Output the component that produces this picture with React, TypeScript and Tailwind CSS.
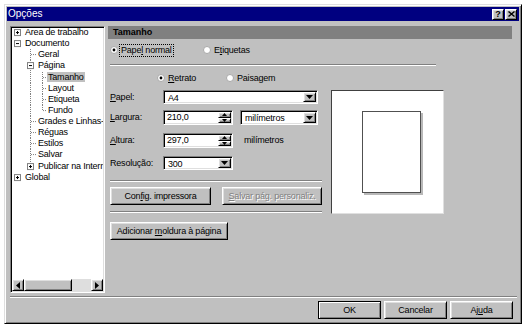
import React from 'react';

const raised =
  'bg-[#c0c0c0] border border-t-white border-l-white border-r-black border-b-black shadow-[inset_1px_1px_0_#dfdfdf,inset_-1px_-1px_0_#808080]';
const sunken =
  'bg-white border border-t-[#808080] border-l-[#808080] border-r-white border-b-white shadow-[inset_1px_1px_0_#000,inset_-1px_-1px_0_#dfdfdf]';

const ROW_H = 11.14;

type TreeNode = {
  label: string;
  level: 0 | 1 | 2;
  box?: '+' | '-';
  sel?: boolean;
  v1?: 'full' | 'half';
  v2?: 'full' | 'half';
};

const nodes: TreeNode[] = [
  { label: 'Área de trabalho', level: 0, box: '+' },
  { label: 'Documento', level: 0, box: '-' },
  { label: 'Geral', level: 1, v1: 'full' },
  { label: 'Página', level: 1, box: '-', v1: 'full' },
  { label: 'Tamanho', level: 2, sel: true, v1: 'full', v2: 'full' },
  { label: 'Layout', level: 2, v1: 'full', v2: 'full' },
  { label: 'Etiqueta', level: 2, v1: 'full', v2: 'full' },
  { label: 'Fundo', level: 2, v1: 'full', v2: 'half' },
  { label: 'Grades e Linhas-guia', level: 1, v1: 'full' },
  { label: 'Réguas', level: 1, v1: 'full' },
  { label: 'Estilos', level: 1, v1: 'full' },
  { label: 'Salvar', level: 1, v1: 'full' },
  { label: 'Publicar na Internet', level: 1, box: '+', v1: 'half' },
  { label: 'Global', level: 0, box: '+' },
];

function ExpandBox({ x, m, kind }: { x: number; m: number; kind: '+' | '-' }) {
  return (
    <g>
      <rect x={x + 0.5} y={m - 3} width={6} height={6} fill="#fff" stroke="#808080" />
      <line x1={x + 2} y1={m} x2={x + 5} y2={m} stroke="#000" />
      {kind === '+' && <line x1={x + 3.5} y1={m - 1.5} x2={x + 3.5} y2={m + 1.5} stroke="#000" />}
    </g>
  );
}

function TreeRow({ n }: { n: TreeNode }) {
  const m = ROW_H / 2;
  const dot = { stroke: '#808080', strokeDasharray: '1 1' };
  const pad = n.level === 0 ? 'pl-[12px]' : n.level === 1 ? 'pl-[25px]' : 'pl-[35px]';
  return (
    <div className={`relative h-[11.14px] flex items-center whitespace-nowrap ${pad}`}>
      <svg className="absolute left-0 top-0" width="36" height={ROW_H}>
        {n.v1 && <line x1={18.5} y1={0} x2={18.5} y2={n.v1 === 'full' ? ROW_H : m} {...dot} />}
        {n.v2 && <line x1={30.5} y1={0} x2={30.5} y2={n.v2 === 'full' ? ROW_H : m} {...dot} />}
        {n.level === 1 && !n.box && <line x1={19} y1={m} x2={24} y2={m} {...dot} />}
        {n.level === 2 && <line x1={31} y1={m} x2={35} y2={m} {...dot} />}
        {n.level === 0 && n.box && <ExpandBox x={2} m={m} kind={n.box} />}
        {n.level === 1 && n.box && <ExpandBox x={15} m={m} kind={n.box} />}
      </svg>
      <span className={n.sel ? 'bg-[#c0c0c0] px-[1px] h-[10px] flex items-center' : 'px-[1px]'}>{n.label}</span>
    </div>
  );
}

function Tri({ dir }: { dir: 'down' | 'up' | 'left' | 'right' }) {
  if (dir === 'down')
    return (
      <svg width="7" height="4" viewBox="0 0 7 4">
        <path d="M0 0h7L3.5 4z" fill="#000" />
      </svg>
    );
  if (dir === 'up')
    return (
      <svg width="5" height="3" viewBox="0 0 5 3">
        <path d="M0 3h5L2.5 0z" fill="#000" />
      </svg>
    );
  if (dir === 'left')
    return (
      <svg width="4" height="7" viewBox="0 0 4 7">
        <path d="M4 0v7L0 3.5z" fill="#000" />
      </svg>
    );
  return (
    <svg width="4" height="7" viewBox="0 0 4 7">
      <path d="M0 0v7L4 3.5z" fill="#000" />
    </svg>
  );
}

function Radio({ checked }: { checked?: boolean }) {
  return (
    <svg width="8" height="8" viewBox="0 0 8 8" className="shrink-0">
      <circle cx="4" cy="4" r="3.5" fill="#fff" stroke="#a8a8a8" />
      {checked && <circle cx="4" cy="4" r="1.4" fill="#000" />}
    </svg>
  );
}

function Combo({ value, w, h }: { value: string; w: string; h: string }) {
  return (
    <div className={`${sunken} ${w} ${h} flex p-[1px]`}>
      <span className="flex-1 pl-[3px] pt-[2px]">{value}</span>
      <div className={`${raised} w-[13px] flex items-center justify-center`}>
        <Tri dir="down" />
      </div>
    </div>
  );
}

function Spin({ value }: { value: string }) {
  return (
    <div className={`${sunken} w-[70px] h-[15px] flex p-[1px]`}>
      <span className="flex-1 pl-[2px] pt-[1px]">{value}</span>
      <div className="w-[13px] flex flex-col">
        <div className={`${raised} flex-1 flex items-center justify-center`}>
          <Tri dir="up" />
        </div>
        <div className={`${raised} flex-1 flex items-center justify-center`}>
          <svg width="5" height="3" viewBox="0 0 5 3">
            <path d="M0 0h5L2.5 3z" fill="#000" />
          </svg>
        </div>
      </div>
    </div>
  );
}

function Sep({ w }: { w: string }) {
  return <div className={`${w} h-[2px] border-t border-t-[#808080] border-b border-b-white`} />;
}

export default function App() {
  return (
    <div className="w-[528px] h-[329px] bg-white pt-[4px] pl-[4px] font-['Liberation_Sans',Arial,sans-serif] text-[9px] text-black tracking-[-0.2px] leading-none">
      <div className="w-[518px] h-[320px] bg-[#c0c0c0] border border-t-[#dfdfdf] border-l-[#dfdfdf] border-r-black border-b-black shadow-[inset_1px_1px_0_#fff,inset_-1px_-1px_0_#808080] p-[2px] flex flex-col">
        {/* title bar */}
        <div className="h-[14px] bg-[#000080] flex items-center justify-between pl-[1px] pr-[2px]">
          <span className="text-white text-[10px] tracking-normal">Opções</span>
          <div className="flex gap-[1px]">
            <div className={`${raised} w-[12px] h-[11px] flex items-center justify-center font-bold text-[9px]`}>?</div>
            <div className={`${raised} w-[12px] h-[11px] flex items-center justify-center`}>
              <svg width="7" height="6" viewBox="0 0 7 6">
                <path d="M0.5 0.5l6 5M6.5 0.5l-6 5" stroke="#000" strokeWidth="1.4" />
              </svg>
            </div>
          </div>
        </div>

        <div className="flex pt-[5px] pl-[3px]">
          {/* tree */}
          <div className={`${sunken} w-[95px] h-[267px] p-[1px] flex flex-col`}>
            <div className="flex-1 overflow-hidden -mt-[1px]">
              {nodes.map((n) => (
                <TreeRow key={n.label} n={n} />
              ))}
            </div>
            <div className="h-[12px] flex bg-[#dedede]">
              <div className={`${raised} w-[12px] flex items-center justify-center`}>
                <Tri dir="left" />
              </div>
              <div className={`${raised} w-[48px]`} />
              <div className="flex-1" />
              <div className={`${raised} w-[12px] flex items-center justify-center`}>
                <Tri dir="right" />
              </div>
            </div>
          </div>

          {/* panel */}
          <div className="ml-[3px] w-[404px] flex flex-col">
            <div className="h-[13px] bg-[#808080] flex items-center pl-[5px] font-bold tracking-normal">Tamanho</div>

            <div className="mt-[4px] h-[14px] flex items-center">
              <div className="w-[95px] flex items-center pl-[2px]">
                <Radio checked />
                <span className="ml-[1px] border border-dotted border-black h-[13px] flex items-center px-[1px]">
                  <span>
                    Pape<u>l</u> normal
                  </span>
                </span>
              </div>
              <Radio />
              <span className="ml-[3px]">
                E<u>t</u>iquetas
              </span>
            </div>

            <div className="mt-[7px] ml-[2px]">
              <Sep w="w-[326px]" />
            </div>

            <div className="mt-[5px] h-[14px] flex items-center pl-[49px]">
              <div className="w-[69px] flex items-center">
                <Radio checked />
                <span className="ml-[3px]">
                  <u>R</u>etrato
                </span>
              </div>
              <Radio />
              <span className="ml-[3px]">Paisagem</span>
            </div>

            <div className="mt-[5px] flex">
              <div className="w-[215px] flex flex-col">
                <div className="h-[14px] flex items-center">
                  <span className="w-[55px] pl-[2px]">
                    <u>P</u>apel:
                  </span>
                  <Combo value="A4" w="w-[155px]" h="h-[14px]" />
                </div>
                <div className="mt-[6px] h-[15px] flex items-center">
                  <span className="w-[55px] pl-[2px]">
                    <u>L</u>argura:
                  </span>
                  <Spin value="210,0" />
                  <div className="ml-[7px]">
                    <Combo value="milímetros" w="w-[78px]" h="h-[15px]" />
                  </div>
                </div>
                <div className="mt-[8px] h-[15px] flex items-center">
                  <span className="w-[55px] pl-[2px]">
                    <u>A</u>ltura:
                  </span>
                  <Spin value="297,0" />
                  <span className="ml-[11px]">milímetros</span>
                </div>
                <div className="mt-[8px] h-[14px] flex items-center">
                  <span className="w-[55px] pl-[2px]">Resolução:</span>
                  <Combo value="300" w="w-[70px]" h="h-[14px]" />
                </div>
                <div className="mt-[10px] ml-[2px]">
                  <Sep w="w-[212px]" />
                </div>
                <div className="mt-[5px] h-[18px] flex pl-[2px]">
                  <div className={`${raised} w-[101px] flex items-center justify-center`}>
                    <span>
                      Con<u>f</u>ig. impressora
                    </span>
                  </div>
                  <div className={`${raised} ml-[11px] w-[100px] flex items-center justify-center text-[#808080] [text-shadow:1px_1px_0_#fff]`}>
                    <span>
                      <u>S</u>alvar pág. personaliz.
                    </span>
                  </div>
                </div>
                <div className="mt-[6px] ml-[2px]">
                  <Sep w="w-[212px]" />
                </div>
                <div className="mt-[9px] h-[18px] flex pl-[2px]">
                  <div className={`${raised} w-[118px] flex items-center justify-center`}>
                    <span>
                      Adicionar <u>m</u>oldura à página
                    </span>
                  </div>
                </div>
              </div>

              {/* preview */}
              <div className="ml-[8px] w-[113px] h-[124px] bg-white border border-t-[#404040] border-l-[#404040] border-r-[#e0e0e0] border-b-[#e0e0e0] pl-[30px] pt-[20px]">
                <div className="w-[59px] h-[82px] bg-white border border-[#505050] shadow-[2px_2px_0_#b8b8b8]" />
              </div>
            </div>
          </div>
        </div>

        <div className="mt-[3px] ml-[3px] mr-[2px]">
          <Sep w="w-full" />
        </div>

        <div className="mt-[3px] flex justify-end gap-[3px] pr-[6px]">
          <div className="w-[63px] h-[18px] border border-black shadow-[inset_1px_1px_0_#fff,inset_-1px_-1px_0_#808080] flex items-center justify-center">
            OK
          </div>
          <div className={`${raised} w-[63px] h-[18px] flex items-center justify-center`}>Cancelar</div>
          <div className={`${raised} w-[63px] h-[18px] flex items-center justify-center`}>
            <span>
              Aj<u>u</u>da
            </span>
          </div>
        </div>
      </div>
    </div>
  );
}
